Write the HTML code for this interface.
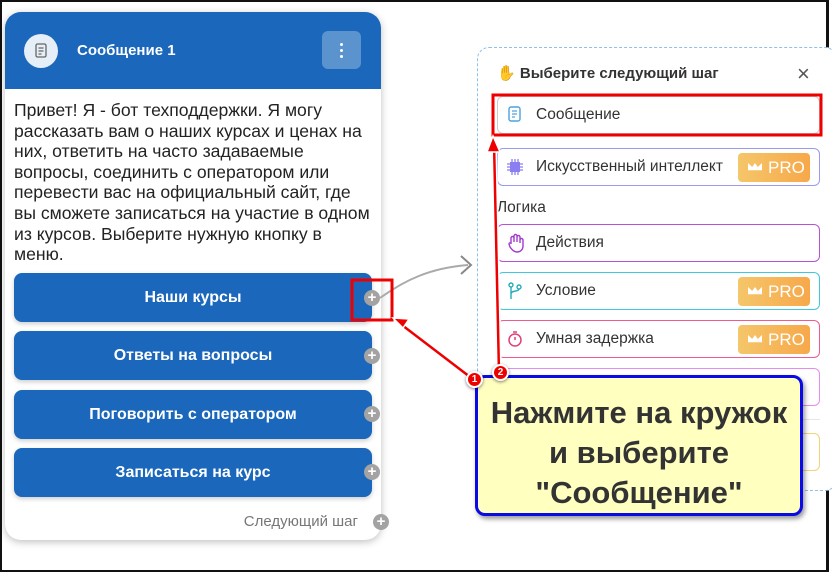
<!DOCTYPE html>
<html><head><meta charset="utf-8"><style>
*{box-sizing:border-box;margin:0;padding:0}
body{width:832px;height:573px;background:#fff;font-family:"Liberation Sans",sans-serif;position:relative;overflow:hidden}
.frame{position:absolute;left:0;top:0;width:829px;height:572px;border:2px solid #111;border-right-width:3px}
.card{position:absolute;left:5px;top:12px;width:376px;height:528px;background:#fff;border-radius:16px;box-shadow:0 2px 8px rgba(0,0,0,.25);overflow:hidden}
.hdr{height:77px;background:#1a67bb;position:relative}
.ic{position:absolute;left:19px;top:22px;width:34px;height:34px;border-radius:50%;background:#e6eef7}
.ttl{position:absolute;left:72px;top:30px;color:#fff;font-weight:bold;font-size:15px}
.menu{position:absolute;left:317px;top:19px;width:39px;height:38px;border-radius:6px;background:#5b93cf}
.menu i{position:absolute;left:18px;width:3px;height:3px;border-radius:50%;background:#fff}
.txt{position:absolute;left:9px;top:88px;width:358px;font-size:17.6px;line-height:20.6px;color:#222}
.btn{position:absolute;left:14px;width:358px;height:49px;background:#1a67bb;border-radius:8px;color:#fff;font-weight:bold;font-size:16px;text-align:center;line-height:49px;box-shadow:0 2px 5px rgba(0,0,0,.2)}
.plus{position:absolute;width:16px;height:16px;border-radius:50%;background:#a3a3a3;color:#fff;font-size:15px;line-height:16px;text-align:center;font-weight:bold}
.panel{position:absolute;left:477px;top:47px;width:360px;height:444px;border:1px dashed #8fc0ea;border-radius:12px;background:#fff}
.it{position:absolute;left:497px;width:323px;height:38px;border:1px solid #ccc;border-radius:6px;font-size:15.5px;color:#333;line-height:36px;padding-left:38px;background:#fff}
.pro{position:absolute;right:9px;top:4px;width:72px;height:29px;border-radius:4px;background:linear-gradient(90deg,#f5c66a,#f7a84a);color:#fff;font-size:17px;line-height:29px;padding-left:30px}
.pro:before{content:"";position:absolute;left:10px;top:10px;width:14px;height:9px;background:#fff;clip-path:polygon(0 0,30% 45%,50% 0,70% 45%,100% 0,100% 80%,0 80%)}
.call{position:absolute;left:475px;top:375px;width:328px;height:141px;background:#ffffc0;border:3px solid #0a0ae6;border-radius:10px;box-shadow:2px 3px 5px rgba(0,0,0,.4);text-align:center;font-weight:bold;font-size:31px;line-height:40px;color:#333;padding-top:15px}
.badge{position:absolute;width:17px;height:17px;border-radius:50%;background:#e00;border:2px solid #fff;color:#fff;font-size:10px;font-weight:bold;text-align:center;line-height:13px;box-shadow:0 1px 3px rgba(0,0,0,.5)}
</style></head><body>
<div class="frame"></div>
<div class="card">
 <div class="hdr">
  <div class="ic"><svg width="34" height="34"><rect x="12" y="10" width="10" height="13" rx="1.5" fill="none" stroke="#666" stroke-width="1.3"/><path d="M14.5 14h5M14.5 17h5M14.5 20h3" stroke="#666" stroke-width="1.2"/></svg></div>
  <div class="ttl">Сообщение 1</div>
  <div class="menu"><i style="top:12px"></i><i style="top:18px"></i><i style="top:24px"></i></div>
 </div>
 <div class="txt">Привет! Я - бот техподдержки. Я могу рассказать вам о наших курсах и ценах на них, ответить на часто задаваемые вопросы, соединить с оператором или перевести вас на официальный сайт, где вы сможете записаться на участие в одном из курсов. Выберите нужную кнопку в меню.</div>
 <div style="position:absolute;right:23px;top:501px;font-size:15px;color:#777">Следующий шаг</div>
</div>
<div class="btn" style="top:273px">Наши курсы</div>
<div class="btn" style="top:331px">Ответы на вопросы</div>
<div class="btn" style="top:390px">Поговорить с оператором</div>
<div class="btn" style="top:448px">Записаться на курс</div>
<div class="plus" style="left:364px;top:290px">+</div>
<div class="plus" style="left:364px;top:348px">+</div>
<div class="plus" style="left:364px;top:406px">+</div>
<div class="plus" style="left:364px;top:464px">+</div>
<div class="plus" style="left:373px;top:514px">+</div>

<div class="panel"></div>
<div style="position:absolute;left:497px;top:64px;font-size:15px;font-weight:bold;color:#333"><span style="color:#e0a020">✋</span> Выберите следующий шаг</div>
<div style="position:absolute;left:797px;top:61px;font-size:22px;color:#555">×</div>
<div class="it" style="top:96px;border-color:#ccc">Сообщение<svg style="position:absolute;left:8px;top:9px" width="18" height="18"><rect x="3" y="1" width="11" height="14" rx="2" fill="none" stroke="#4aa3e0" stroke-width="1.4"/><path d="M6 5h5M6 8h5M6 11h3" stroke="#4aa3e0" stroke-width="1.3"/></svg></div>
<div class="it" style="top:148px;border-color:#9a9af0">Искусственный интеллект<svg style="position:absolute;left:7px;top:8px" width="20" height="20"><rect x="5" y="5" width="10" height="10" fill="#8a7ef0"/><path d="M2 7h3M2 10h3M2 13h3M15 7h3M15 10h3M15 13h3M7 2v3M10 2v3M13 2v3M7 15v3M10 15v3M13 15v3" stroke="#8a7ef0" stroke-width="1.3"/></svg><div class="pro">PRO</div></div>
<div style="position:absolute;left:497px;top:199px;font-size:15.5px;color:#333">Логика</div>
<div class="it" style="top:224px;border-color:#b653d6">Действия<svg style="position:absolute;left:9px;top:8px" width="18" height="20"><path d="M4 11V5a1.5 1.5 0 013 0v4V3a1.5 1.5 0 013 0v6V4a1.5 1.5 0 013 0v6-3a1.5 1.5 0 013 0v6c0 4-3 6-6 6s-5-2-7-5l-1-3a1.3 1.3 0 012-1z" fill="none" stroke="#a23ad0" stroke-width="1.4"/></svg></div>
<div class="it" style="top:272px;border-color:#40c8dc">Условие<svg style="position:absolute;left:9px;top:9px" width="18" height="18"><circle cx="4" cy="3" r="2" fill="none" stroke="#2ab" stroke-width="1.4"/><circle cx="12" cy="5" r="2" fill="none" stroke="#2ab" stroke-width="1.4"/><path d="M4 5v12M4 12c0-4 8-2 8-5" fill="none" stroke="#2ab" stroke-width="1.4"/></svg><div class="pro">PRO</div></div>
<div class="it" style="top:320px;border-color:#f05a8c">Умная задержка<svg style="position:absolute;left:8px;top:9px" width="18" height="18"><circle cx="9" cy="10" r="6" fill="none" stroke="#e0407a" stroke-width="1.5"/><path d="M7 2h4M9 10V7" stroke="#e0407a" stroke-width="1.5"/></svg><div class="pro">PRO</div></div>
<div class="it" style="top:368px;border-color:#e58cf0"></div>
<div style="position:absolute;left:497px;top:419px;width:323px;height:1px;background:#e6e6e6"></div>
<div class="it" style="top:433px;border-color:#f0d478"></div>

<svg style="position:absolute;left:0;top:0" width="832" height="573">
 <path d="M380 298 C405 280 430 268 468 265" fill="none" stroke="#aaa" stroke-width="2"/>
 <path d="M461 256l10 9-10 9" fill="none" stroke="#888" stroke-width="2"/>
 <rect x="352" y="280" width="40" height="40" fill="none" stroke="#e00" stroke-width="3"/>
 <rect x="493" y="95" width="328" height="40" fill="none" stroke="#e00" stroke-width="3"/>
 <g stroke="#fff" stroke-width="6" fill="none"><path d="M474 380L398 322"/><path d="M499 373L494 142"/></g>
 <g stroke="#e00" stroke-width="2.5" fill="none"><path d="M474 380L398 322"/><path d="M499 373L494 142"/></g>
 <path d="M393 318l16 1-6 9z" fill="#e00" stroke="#fff" stroke-width="1.5"/>
 <path d="M493 136l7 16h-13z" fill="#e00" stroke="#fff" stroke-width="1.5"/>
</svg>
<div class="call">Нажмите на кружок<br>и выберите<br>"Сообщение"</div>
<div class="badge" style="left:466px;top:371px">1</div>
<div class="badge" style="left:492px;top:364px">2</div>
</body></html>
